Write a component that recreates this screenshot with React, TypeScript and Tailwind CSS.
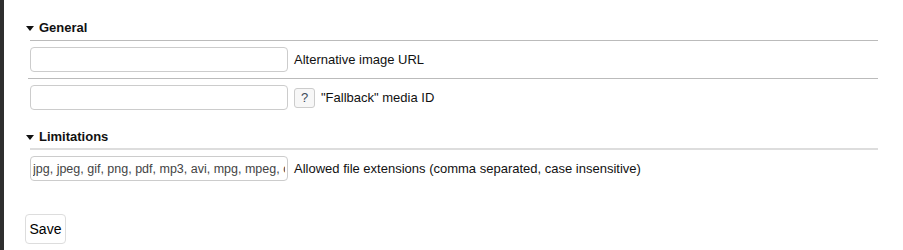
export default function App() {
  const font = { fontFamily: '"Liberation Sans", Arial, sans-serif' }
  return (
    <div className="flex h-[250px] w-[903px] bg-white text-[13px] text-[#111]" style={font}>
      <div className="w-[4px] shrink-0 bg-[#2e2e2e]" />
      <div className="flex-1 pl-[24px] pr-[25px] pt-[20px]">
        <SectionHeading title="General" />
        <div className="flex items-center gap-[6px] border-b border-[#bbbbbb] py-[6px] pl-[2px]">
          <input className="h-[25px] w-[258px] rounded-[4px] border border-[#cccccc] px-[4px] outline-none" />
          <span>Alternative image URL</span>
        </div>
        <div className="flex items-center gap-[6px] pt-[6px] pl-[2px]">
          <input className="h-[25px] w-[258px] rounded-[4px] border border-[#cccccc] px-[4px] outline-none" />
          <button className="flex h-[20px] w-[21px] items-center justify-center rounded-[3px] border border-[#cccccc] bg-[#f7f7f7] text-[13px] text-[#3d4a57]">
            ?
          </button>
          <span>"Fallback" media ID</span>
        </div>
        <div className="mt-[19px]">
          <div className="flex h-[16px] items-center gap-[5px] font-bold">
            <Caret />
            <span>Limitations</span>
          </div>
          <div className="mt-[3px] ml-[2px] h-[2px] bg-[#dddddd]" />
        </div>
        <div className="flex items-center gap-[6px] pt-[6px] pl-[2px]">
          <input
            className="h-[25px] w-[258px] rounded-[4px] border border-[#cccccc] px-[2px] text-[12.5px] text-[#444] outline-none"
            defaultValue="jpg, jpeg, gif, png, pdf, mp3, avi, mpg, mpeg, ogg, wav"
          />
          <span>Allowed file extensions (comma separated, case insensitive)</span>
        </div>
        <button className="mt-[33px] -ml-[3px] h-[30px] w-[41px] rounded-[4px] border border-[#dddddd] bg-white text-[14px] text-black">
          Save
        </button>
      </div>
    </div>
  )
}

function Caret() {
  return (
    <svg width="8" height="5" viewBox="0 0 8 5" className="-ml-[2px]">
      <polygon points="0,0 8,0 4,5" fill="#111" />
    </svg>
  )
}

function SectionHeading({ title }: { title: string }) {
  return (
    <div>
      <div className="flex h-[16px] items-center gap-[5px] font-bold">
        <Caret />
        <span>{title}</span>
      </div>
      <div className="mt-[4px] ml-[2px] h-px bg-[#bbbbbb]" />
    </div>
  )
}
